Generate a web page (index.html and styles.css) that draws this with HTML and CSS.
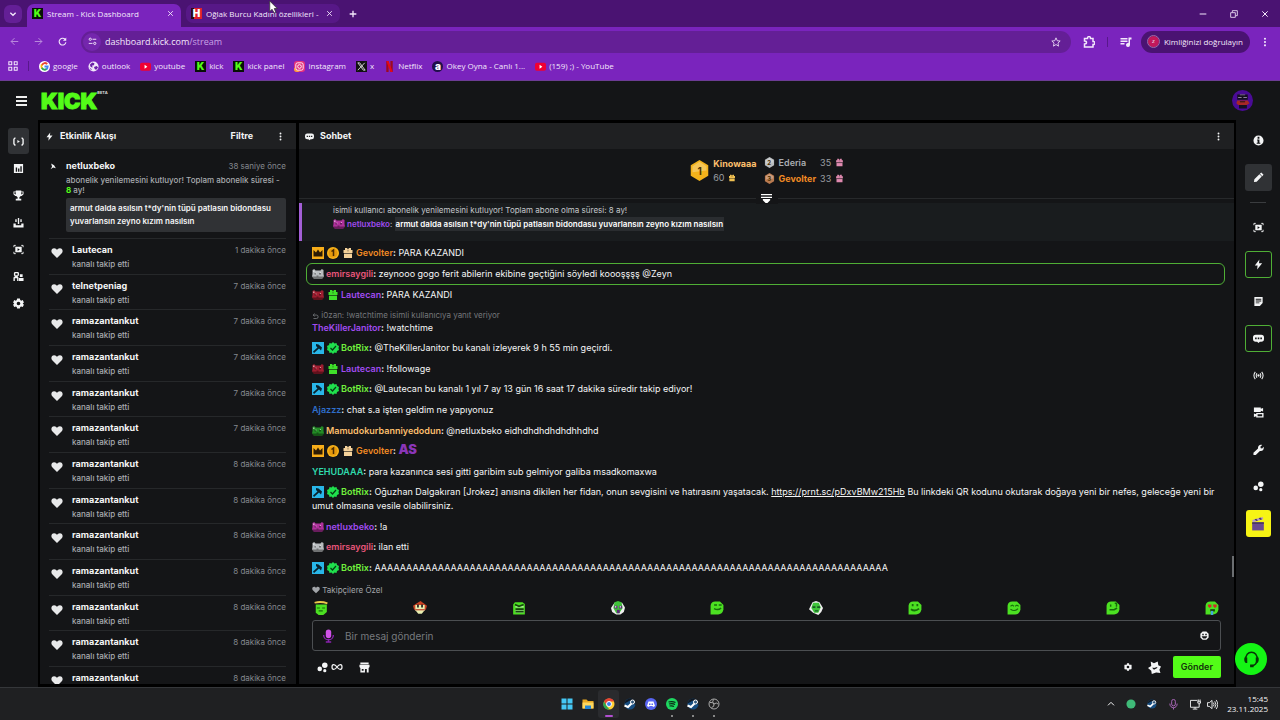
FILE: index.html
```html
<!DOCTYPE html>
<html lang="tr">
<head>
<meta charset="utf-8">
<title>Stream - Kick Dashboard</title>
<link rel="stylesheet" href="styles.css">
</head>
<body>
<svg class="sprite" aria-hidden="true">
  <symbol id="heart" viewBox="0 0 24 24"><path d="M12 22 2.500 12.600C-1 8.500 1 2.500 6.300 2.500 9 2.500 11 4 12 6c1-2 3-3.500 5.700-3.500 5.300 0 7.300 6 3.800 10.100z"/></symbol>
  <symbol id="bolt" viewBox="0 0 24 24"><path d="M14 1 4 14h6l-1 9L20 9h-7z"/></symbol>
  <symbol id="dots" viewBox="0 0 24 24"><circle cx="12" cy="4" r="2.500"/><circle cx="12" cy="12" r="2.500"/><circle cx="12" cy="20" r="2.500"/></symbol>
  <symbol id="gear" viewBox="0 0 24 24"><path fill-rule="evenodd" d="M9 1h6l.8 3.600 2 1.200 3.500-1.200 2.500 5-2.600 2.400 2.600 2.600-2.600 4.800-3.500-1-2 1.100L15 23H9l-.8-3.500-2-1.100-3.500 1L.2 14.600 2.800 12 .2 9.600l2.500-5 3.500 1.200 2-1.200zM12 8a4 4 0 1 0 0 8 4 4 0 0 0 0-8z"/></symbol>
  <symbol id="chat" viewBox="0 0 24 24"><path fill-rule="evenodd" d="M6 4h12a6 6 0 0 1 6 6v3a6 6 0 0 1-6 6h-3l-3 3-3-3H6a6 6 0 0 1-6-6v-3a6 6 0 0 1 6-6zm-1.500 6v3.500H8V10zm5.800 0v3.500h3.500V10zm5.700 0v3.500h3.500V10z"/></symbol>
  <symbol id="live" viewBox="0 0 24 24"><path d="M9.500 8.500 15 12l-5.500 3.500z"/><path fill="none" stroke="currentColor" stroke-width="3" d="M5.500 4.500H4L2 7v10l2 2.500h1.500M18.500 4.500H20L22 7v10l-2 2.500h-1.500"/></symbol>
  <symbol id="signal" viewBox="0 0 24 24"><circle cx="12" cy="12" r="2.500"/><path fill="none" stroke="currentColor" stroke-width="2.200" d="M5 4q-6 8 0 16M19 4q6 8 0 16M8.500 7q-3 5 0 10M15.500 7q3 5 0 10"/></symbol>
  <symbol id="stats" viewBox="0 0 24 24"><path fill-rule="evenodd" d="M2 2h20v20H2zm4 8v9h3v-9zm5 2v7h3v-7zm5-5v12h3V7z"/></symbol>
  <symbol id="cup" viewBox="0 0 24 24"><path fill-rule="evenodd" d="M6 1h12v2h5v6l-4 4h-2l-3 3v3h4v4H6v-4h4v-3l-3-3H5L1 9V3h5zM3 5v3l3 2V5zm15 0v5l3-2V5z"/></symbol>
  <symbol id="stream" viewBox="0 0 24 24"><path d="M1 14h5v4h12v-4h5v9H1zM10.500 2h3v13h-3zM5 5h3v6H5zM16 5h3v6h-3z"/></symbol>
  <symbol id="clip" viewBox="0 0 24 24"><path fill-rule="evenodd" d="M5 6h14v12H5zm5 3v6l5-3z"/><path fill="none" stroke="currentColor" stroke-width="2" d="M2 7V3h4M18 3h4v4M22 17v4h-4M6 21H2v-4"/></symbol>
  <symbol id="people" viewBox="0 0 24 24"><path fill-rule="evenodd" d="M4 2h7l2 2v5l-3 3 2 2v8H9v-6H4v6H1v-8l3-2-2-3V4zm1 3v4h5V5zM15 7h6v6h-6zM13 15h10v7H13z"/></symbol>
  <symbol id="info" viewBox="0 0 24 24"><path fill-rule="evenodd" d="M12 1a11 11 0 1 1 0 22 11 11 0 0 1 0-22zm-2 3v4h4V4zM9 10v2h1v5H8v2h8v-2h-2v-7z"/></symbol>
  <symbol id="pencil" viewBox="0 0 24 24"><path d="m2 22 1-6L14 5l5 5L8 21zM15 4l3-3 5 5-3 3z"/></symbol>
  <symbol id="note" viewBox="0 0 24 24"><path fill-rule="evenodd" d="M3 2h18v13l-6 7H3zm3 4v2h12V6zm0 4v2h12v-2zm0 4v2h8v-2z"/></symbol>
  <symbol id="cams" viewBox="0 0 24 24"><path fill-rule="evenodd" d="M2 1h15v3l5-2v8l-5-2v3H2zM7 13h16v10H7v-3l-5 2v-8l5 2zm3 3v4h10v-4z"/></symbol>
  <symbol id="wrench" viewBox="0 0 24 24"><path d="M1 19 11 10c-1-5 3-10 9-8l-4 4 1 3 3 1 3-4c2 6-3 11-8 9l-9 9H1z"/></symbol>
  <symbol id="orbs" viewBox="0 0 24 24"><circle cx="17" cy="7" r="6"/><circle cx="6" cy="15" r="5"/><circle cx="17" cy="19" r="3.500"/></symbol>
  <symbol id="mic" viewBox="0 0 24 24"><rect x="7" y="0" width="10" height="16" rx="5" fill="#d052e8"/><path fill="none" stroke="currentColor" stroke-width="2.500" d="M3 10c0 12 18 12 18 0M12 19v5M7 23h10"/></symbol>
  <symbol id="micline" viewBox="0 0 24 24"><g fill="none" stroke="currentColor" stroke-width="2"><rect x="8" y="1" width="8" height="14" rx="4"/><path d="M4 10c0 12 16 12 16 0M12 19v4"/></g></symbol>
  <symbol id="shop" viewBox="0 0 24 24"><path fill-rule="evenodd" d="M3 1h18v4H3zM1 6h22v5l-2 2v10h-4v-8h-4v8H3V13l-2-2zm5 9v4h4v-4z"/></symbol>
  <symbol id="face" viewBox="0 0 24 24"><path fill-rule="evenodd" d="M7 1h10l6 6v10l-6 6H7l-6-6V7zM6 7v4h4V7zm8 0v4h4V7zM5 14v2l4 4h6l4-4v-2z"/></symbol>
  <symbol id="badge" viewBox="0 0 24 24"><path fill-rule="evenodd" d="m5 1 6 3 7-3 1 7 5 2-3 6 2 6-8-1-8 3-1-6-6-5 6-4zm3 12 3 3 6-3v-2l-6 2-2-1z"/></symbol>
  <symbol id="headset" viewBox="0 0 24 24"><path fill="none" stroke="#073507" stroke-width="2" d="M4 13C2-2 22-2 20 13q-1 7-7 8"/><path fill="#073507" d="M2 9h4v8H4q-3-2-2-8zm16 0h4q1 6-2 8h-2zM10 19h5v4h-5z"/></symbol>
  <symbol id="reply" viewBox="0 0 24 24"><path fill="none" stroke="currentColor" stroke-width="3" d="M9 2 4 7l5 5M4 7h11q6 0 6 6t-6 6H5"/></symbol>
  <symbol id="close" viewBox="0 0 24 24"><path fill="none" stroke="currentColor" stroke-width="3" d="m4 4 16 16M20 4 4 20"/></symbol>
  <symbol id="plus" viewBox="0 0 24 24"><path fill="none" stroke="currentColor" stroke-width="4" d="M12 2v20M2 12h20"/></symbol>
  <symbol id="down" viewBox="0 0 24 24"><path fill="none" stroke="currentColor" stroke-width="4" d="m4 8 8 8 8-8"/></symbol>
  <symbol id="up" viewBox="0 0 24 24"><path fill="none" stroke="currentColor" stroke-width="3" d="m3 16 9-9 9 9"/></symbol>
  <symbol id="arrow" viewBox="0 0 24 24"><path fill="none" stroke="currentColor" stroke-width="2.500" d="M22 12H3M12 3l-9 9 9 9"/></symbol>
  <symbol id="reload" viewBox="0 0 24 24"><path fill="none" stroke="currentColor" stroke-width="3" d="M20 8a9 9 0 1 0 1 6"/><path d="M22 1v9h-9z"/></symbol>
  <symbol id="tune" viewBox="0 0 24 24"><g fill="none" stroke="currentColor" stroke-width="2.500"><circle cx="6" cy="6" r="3"/><circle cx="18" cy="17" r="3"/><path d="M12 6h10M2 17h10"/></g></symbol>
  <symbol id="star" viewBox="0 0 24 24"><path fill="none" stroke="currentColor" stroke-width="2" d="m12 2 3 7 7 .6-5.300 5L18 22l-6-4-6 4 1.300-7.400L2 9.600 9 9z"/></symbol>
  <symbol id="puzzle" viewBox="0 0 24 24"><path fill="none" stroke="currentColor" stroke-width="3" d="M3 5h6q0-4 3-4t3 4h5v6q4 0 4 3t-4 3v5H3v-6q4 0 4-3t-4-3z"/></symbol>
  <symbol id="media" viewBox="0 0 24 24"><path d="M1 4h14v3H1zM1 9h14v3H1zM1 14h8v3H1zM17 3h6v4h-3v11a4 4 0 1 1-3-4z"/></symbol>
  <symbol id="apps" viewBox="0 0 24 24"><path fill="none" stroke="currentColor" stroke-width="2.500" d="M2 2h7v7H2zM15 2h7v7h-7zM2 15h7v7H2zM15 15h7v7h-7z"/></symbol>
  <symbol id="google" viewBox="0 0 24 24"><circle cx="12" cy="12" r="12" fill="#fff"/><g fill="none" stroke-width="4"><path stroke="#ea4335" d="M6 9q6-8 12-2"/><path stroke="#fbbc05" d="M6 8q-2 4 0 8"/><path stroke="#34a853" d="M6 15q5 7 11 2"/><path stroke="#4285f4" d="M12 12h7q0 4-3 6"/></g></symbol>
  <symbol id="globe" viewBox="0 0 24 24"><circle cx="12" cy="12" r="11" fill="#f1e7fa"/><path fill="#6b21a8" d="m4 8 5-5 5 2-1 4-4 1 1 4-4-1zm9 5 6-2 3 3-4 5-3-1zM3 14l5 4-1 2z"/></symbol>
  <symbol id="youtube" viewBox="0 0 24 24"><rect y="4" width="24" height="17" rx="4" fill="#f00033"/><path fill="#fff" d="m10 8 6 4.500-6 4.500z"/></symbol>
  <symbol id="insta" viewBox="0 0 24 24"><rect width="24" height="24" rx="6" fill="#e4307c"/><path fill="#f99b3c" d="M0 14 12 24H6q-6 0-6-6z"/><g fill="none" stroke="#fff" stroke-width="2"><rect x="4" y="4" width="16" height="16" rx="4"/><circle cx="12" cy="12" r="4"/></g></symbol>
  <symbol id="cross" viewBox="0 0 24 24"><path fill="#111" d="M0 0h24v24H0z"/><path fill="none" stroke="#ddd" stroke-width="2" d="M4 4h4l12 16h-4zM19 4 4 20"/></symbol>
  <symbol id="ribbon" viewBox="0 0 24 24"><path fill="#9d0920" d="M5 0h5v24H5zM14 0h5v24h-5z"/><path fill="#e50914" d="M5 0h5l9 24h-5z"/></symbol>
  <symbol id="crown" viewBox="0 0 24 24"><path fill="#f7ad19" d="M0 0h24v24H0z"/><path fill="#2c1b04" d="m3 6 5 5 4-6 4 6 5-5v13H3z"/></symbol>
  <symbol id="coin" viewBox="0 0 24 24"><circle cx="12" cy="12" r="12" fill="#f9b51b"/><circle cx="12" cy="12" r="9" fill="#e69a0d"/><path fill="none" stroke="#4a2b00" stroke-width="3" d="m9 9 4-3v12"/></symbol>
  <symbol id="gift" viewBox="0 0 24 24"><path d="M3 6h18v6H3zM4 13h16v9H4zM6 2h4l2 3 2-3h4v4H6z"/><path fill="#0003" d="M3 12h18v2H3zM10 6h4v3h-4z"/></symbol>
  <symbol id="hammer" viewBox="0 0 24 24"><path fill="#29b6e8" d="M0 0h24v24H0z"/><path fill="#08222d" d="m8 4 5 1 7 6-2 6-4-4L4 22l-2-3 9-8-3-3z"/></symbol>
  <symbol id="verified" viewBox="0 0 24 24"><path fill="#1fe04d" d="m12 0 3 3 4-1 1 4 4 2-1 4 1 4-4 2-1 4-4-1-3 3-3-3-4 1-1-4-4-2 1-4-1-4 4-2 1-4 4 1z"/><path fill="none" stroke="#063d14" stroke-width="2.500" d="m7 12 4 4 7-8"/></symbol>
  <symbol id="critter" viewBox="0 0 24 24"><path d="M1 4q4-3 6 1h10q2-4 6-1v8l1 5-4 5H4l-4-5 1-5z"/><path fill="#0006" d="M5 10h3v3H5zM14 10h4v3h-4zM9 15h4v2H9zM0 17h24l-4 5H4z"/><path fill="#fff8" d="M7 9h2v2H7zM16 8h2v2h-2zM2 5h3v3H2z"/></symbol>
  <symbol id="hex" viewBox="0 0 24 24"><path d="M12 0 22 6v12l-10 6L2 18V6z"/><path fill="#fff4" d="m12 2 8 5v5L4 14V7z"/></symbol>
  <symbol id="collapse" viewBox="0 0 24 24"><path fill="#fff" d="M0 2h24v3H0zM0 8h24v3H0zM4 13h16v3l-6 6h-4l-6-6z"/></symbol>
  <symbol id="blob" viewBox="0 0 24 24"><path fill="#4ce022" d="M1 8q1-7 8-7h8l6 6v8q-2 8-9 8H1z"/></symbol>
  <symbol id="steam" viewBox="0 0 24 24"><circle cx="12" cy="12" r="11" fill="#164d80"/><path fill="#101923" d="M1 11C4-3 23-1 23 10v4L12 5z"/><path fill="none" stroke="#fff" stroke-width="4" d="m1 15 7 3 7-7"/><circle cx="17" cy="8" r="4" fill="#31587c" stroke="#fff" stroke-width="2"/></symbol>
  <symbol id="windows" viewBox="0 0 24 24"><path fill="#45c7f4" d="M1 1h10v10H1zM13 1h10v10H13zM1 13h10v10H1zM13 13h10v10H13z"/></symbol>
  <symbol id="folder" viewBox="0 0 24 24"><path fill="#e8a822" d="M1 3h8l3 3h11v15H1z"/><path fill="#ffd75e" d="M1 9h22v12H1z"/><path fill="#2687d5" d="M6 15h12v7H6z"/></symbol>
  <symbol id="chrome" viewBox="0 0 24 24"><circle cx="12" cy="12" r="11" fill="#ffcf33"/><path fill="#e94235" d="M2 7C7-2 19-1 22 7H12l-5 8z"/><path fill="#2da94f" d="m2 7 6 10 5 6C2 24-2 14 2 7z"/><circle cx="12" cy="12" r="5" fill="#3b7ded" stroke="#fff" stroke-width="2"/></symbol>
  <symbol id="discord" viewBox="0 0 24 24"><circle cx="12" cy="12" r="12" fill="#5865f2"/><path fill="#fff" d="M7 7h10l3 9-4 2-1-2H9l-1 2-4-2z"/><path fill="#5865f2" d="M8 11h3v3H8zM13 11h3v3h-3z"/></symbol>
  <symbol id="spotify" viewBox="0 0 24 24"><circle cx="12" cy="12" r="12" fill="#1ed760"/><path fill="none" stroke="#0a2814" stroke-width="2.400" d="M5 8q8-2 14 1M6 12q7-2 12 1M7 16q6-1 9 1"/></symbol>
  <symbol id="obs" viewBox="0 0 24 24"><circle cx="12" cy="12" r="10" fill="#222" stroke="#aaa" stroke-width="2"/><path fill="none" stroke="#aaa" stroke-width="2" d="M11 3q-4 5 1 9 5-4 8 0M12 12q1 6-5 7M4 9q5-1 8 3"/></symbol>
  <symbol id="avatar" viewBox="0 0 24 24"><circle cx="12" cy="12" r="12" fill="#4a0b96"/><path fill="#151020" d="M6 5h12v6H6zM8 17h9v4H8z"/><path fill="#a82825" d="M6 12h12l2 3-3 2H7l-2-2z"/><path fill="#8d7f9c" d="M7 8h4v1H7zM13 8h4v1h-4zM9 5h6v1H9z"/><path fill="#111" d="M9 13h6v1H9z"/></symbol>
  <symbol id="clapper" viewBox="0 0 24 24"><path fill="#6b4a91" d="M2 9h20v14H2z"/><path fill="#b79ac8" d="M2 5 20 0l1 4L3 9z"/><path fill="#4d3966" d="m6 4 3 3 3-1-3-3zm7-2 3 3 3-1-3-3zM2 9h20v3H2z"/></symbol>
</svg>

<header class="browser">
  <div class="tabstrip">
    <button class="tab-search" aria-label="Sekmelerde ara"><svg class="i8"><use href="#down"/></svg></button>
    <div class="tab tab-active"><span class="fav">K</span><span class="tab-title">Stream - Kick Dashboard</span><button class="plain" aria-label="Kapat"><svg class="i7"><use href="#close"/></svg></button></div>
    <div class="tab"><span class="fav fav-h">H</span><span class="tab-title">Oğlak Burcu Kadını özellikleri -</span><button class="plain" aria-label="Kapat"><svg class="i7"><use href="#close"/></svg></button></div>
    <button class="plain new-tab" aria-label="Yeni sekme"><svg class="i8"><use href="#plus"/></svg></button>
    <div class="window-buttons">
      <button class="plain" aria-label="Küçült"><svg class="i8" viewBox="0 0 24 24"><path stroke="currentColor" stroke-width="3" d="M2 12h20"/></svg></button>
      <button class="plain" aria-label="Geri yükle"><svg class="i8" viewBox="0 0 24 24"><path fill="none" stroke="currentColor" stroke-width="2.500" d="M2 8h14v14H2zM7 7V2h15v15h-5"/></svg></button>
      <button class="plain" aria-label="Pencereyi kapat"><svg class="i8"><use href="#close"/></svg></button>
    </div>
    <svg class="cursor" viewBox="0 0 12 18"><path fill="#fff" stroke="#333" d="M1 1v14l3-3 3 5 2-1-2-5h4z"/></svg>
  </div>
  <div class="toolbar">
    <button class="plain nav dim" aria-label="Geri"><svg class="i9"><use href="#arrow"/></svg></button>
    <button class="plain nav dim flip" aria-label="İleri"><svg class="i9"><use href="#arrow"/></svg></button>
    <button class="plain nav" aria-label="Yenile"><svg class="i9"><use href="#reload"/></svg></button>
    <div class="address"><span class="site"><svg class="i9"><use href="#tune"/></svg></span><span class="url">dashboard.kick.com<span>/stream</span></span><svg class="i10"><use href="#star"/></svg></div>
    <button class="plain" aria-label="Uzantılar"><svg class="i12"><use href="#puzzle"/></svg></button>
    <span class="rule"></span>
    <button class="plain" aria-label="Medya"><svg class="i12"><use href="#media"/></svg></button>
    <button class="profile"><span class="initial">z</span>Kimliğinizi doğrulayın</button>
    <button class="plain" aria-label="Menü"><svg class="i10"><use href="#dots"/></svg></button>
  </div>
  <nav class="bookmarks">
    <a href="#" aria-label="Uygulamalar"><svg class="i10"><use href="#apps"/></svg></a><span class="rule"></span>
    <a href="#"><svg><use href="#google"/></svg>google</a>
    <a href="#"><svg><use href="#globe"/></svg>outlook</a>
    <a href="#"><svg><use href="#youtube"/></svg>youtube</a>
    <a href="#"><span class="fav">K</span>kick</a>
    <a href="#"><span class="fav">K</span>kick panel</a>
    <a href="#"><svg><use href="#insta"/></svg>instagram</a>
    <a href="#"><svg><use href="#cross"/></svg>x</a>
    <a href="#"><svg><use href="#ribbon"/></svg>Netflix</a>
    <a href="#"><span class="fav fav-a">a</span>Okey Oyna - Canlı 1...</a>
    <a href="#"><svg><use href="#youtube"/></svg>(159) ;) - YouTube</a>
  </nav>
</header>

<header class="app-header">
  <button class="menu" aria-label="Menü"><span></span><span></span><span></span></button>
  <a class="logo" href="#">KICK<sup>BETA</sup></a>
  <button class="plain account" aria-label="Hesap"><svg><use href="#avatar"/></svg></button>
</header>

<main class="workspace">
  <nav class="rail rail-left">
    <button class="on" aria-label="Yayın"><svg><use href="#live"/></svg></button>
    <button aria-label="İstatistik"><svg><use href="#stats"/></svg></button>
    <button aria-label="Başarılar"><svg><use href="#cup"/></svg></button>
    <button aria-label="Kanal"><svg><use href="#stream"/></svg></button>
    <button aria-label="Klipler"><svg><use href="#clip"/></svg></button>
    <button aria-label="Topluluk"><svg><use href="#people"/></svg></button>
    <button aria-label="Ayarlar"><svg><use href="#gear"/></svg></button>
  </nav>

  <section class="panel activity">
    <div class="panel-head"><svg class="i9"><use href="#bolt"/></svg><h2>Etkinlik Akışı</h2><button class="plain filter">Filtre</button><button class="plain" aria-label="Seçenekler"><svg class="i9"><use href="#dots"/></svg></button></div>
    <article class="renewal">
      <svg class="i7" viewBox="0 0 24 24"><path d="M4 2 14 8l6 10-9-3-9 6 5-8z"/></svg>
      <div class="event-body">
        <div class="event-top"><b>netluxbeko</b><time>38 saniye önce</time></div>
        <p>abonelik yenilemesini kutluyor! Toplam abonelik süresi - <em>8</em> ay!</p>
        <blockquote>armut dalda asılsın t*dy'nin tüpü patlasın bidondasu yuvarlansın zeyno kızım nasılsın</blockquote>
      </div>
    </article>
    <div class="events">
      <article class="event"><svg><use href="#heart"/></svg><div class="event-body"><div class="event-top"><b>Lautecan</b><time>1 dakika önce</time></div><p>kanalı takip etti</p></div></article>
      <article class="event"><svg><use href="#heart"/></svg><div class="event-body"><div class="event-top"><b>telnetpeniag</b><time>7 dakika önce</time></div><p>kanalı takip etti</p></div></article>
      <article class="event"><svg><use href="#heart"/></svg><div class="event-body"><div class="event-top"><b>ramazantankut</b><time>7 dakika önce</time></div><p>kanalı takip etti</p></div></article>
      <article class="event"><svg><use href="#heart"/></svg><div class="event-body"><div class="event-top"><b>ramazantankut</b><time>7 dakika önce</time></div><p>kanalı takip etti</p></div></article>
      <article class="event"><svg><use href="#heart"/></svg><div class="event-body"><div class="event-top"><b>ramazantankut</b><time>7 dakika önce</time></div><p>kanalı takip etti</p></div></article>
      <article class="event"><svg><use href="#heart"/></svg><div class="event-body"><div class="event-top"><b>ramazantankut</b><time>7 dakika önce</time></div><p>kanalı takip etti</p></div></article>
      <article class="event"><svg><use href="#heart"/></svg><div class="event-body"><div class="event-top"><b>ramazantankut</b><time>8 dakika önce</time></div><p>kanalı takip etti</p></div></article>
      <article class="event"><svg><use href="#heart"/></svg><div class="event-body"><div class="event-top"><b>ramazantankut</b><time>8 dakika önce</time></div><p>kanalı takip etti</p></div></article>
      <article class="event"><svg><use href="#heart"/></svg><div class="event-body"><div class="event-top"><b>ramazantankut</b><time>8 dakika önce</time></div><p>kanalı takip etti</p></div></article>
      <article class="event"><svg><use href="#heart"/></svg><div class="event-body"><div class="event-top"><b>ramazantankut</b><time>8 dakika önce</time></div><p>kanalı takip etti</p></div></article>
      <article class="event"><svg><use href="#heart"/></svg><div class="event-body"><div class="event-top"><b>ramazantankut</b><time>8 dakika önce</time></div><p>kanalı takip etti</p></div></article>
      <article class="event"><svg><use href="#heart"/></svg><div class="event-body"><div class="event-top"><b>ramazantankut</b><time>8 dakika önce</time></div><p>kanalı takip etti</p></div></article>
      <article class="event"><svg><use href="#heart"/></svg><div class="event-body"><div class="event-top"><b>ramazantankut</b><time>8 dakika önce</time></div></div></article>
    </div>
  </section>

  <section class="panel chat">
    <div class="panel-head"><svg class="i9"><use href="#chat"/></svg><h2>Sohbet</h2><button class="plain push" aria-label="Seçenekler"><svg class="i9"><use href="#dots"/></svg></button></div>
    <div class="leaders">
      <div class="first"><span class="medal"><svg class="yellow"><use href="#hex"/></svg><i>1</i></span><div><b class="c-sand">Kinowaaa</b><span class="score">60 <svg class="i8 sand"><use href="#gift"/></svg></span></div></div>
      <div class="others">
        <span class="medal small"><svg class="silver"><use href="#hex"/></svg><i>2</i></span><b class="c-gray">Ederia</b><span class="score">35 <svg class="i9 pink"><use href="#gift"/></svg></span>
        <span class="medal small"><svg class="bronze"><use href="#hex"/></svg><i>3</i></span><b class="c-orange">Gevolter</b><span class="score">33 <svg class="i9 pink"><use href="#gift"/></svg></span>
      </div>
      <button class="plain collapse" aria-label="Daralt"><svg class="i11"><use href="#collapse"/></svg></button>
    </div>
    <div class="celebration">
      <p>isimli kullanıcı abonelik yenilemesini kutluyor! Toplam abone olma süresi: 8 ay!</p>
      <p><svg class="bdg magenta"><use href="#critter"/></svg><b class="c-purple">netluxbeko</b>: <mark>armut dalda asılsın t*dy'nin tüpü patlasın bidondasu yuvarlansın zeyno kızım nasılsın</mark></p>
    </div>
    <div class="feed">
      <p><svg class="bdg"><use href="#crown"/></svg><svg class="bdg"><use href="#coin"/></svg><svg class="bdg cream"><use href="#gift"/></svg><b class="c-orange">Gevolter</b><b>:</b> PARA KAZANDI</p>
      <p class="mention"><svg class="bdg silver"><use href="#critter"/></svg><b class="c-pink">emirsaygili</b><b>:</b> zeynooo gogo ferit abilerin ekibine geçtiğini söyledi koooşşşş @Zeyn</p>
      <p><svg class="bdg crimson"><use href="#critter"/></svg><svg class="bdg green"><use href="#gift"/></svg><b class="c-purple">Lautecan</b><b>:</b> PARA KAZANDI</p>
      <div><p class="reply"><svg class="i7"><use href="#reply"/></svg> i0zan: !watchtime isimli kullanıcıya yanıt veriyor</p><p><b class="c-purple">TheKillerJanitor</b><b>:</b> !watchtime</p></div>
      <p><svg class="bdg"><use href="#hammer"/></svg><svg class="bdg"><use href="#verified"/></svg><b class="c-green">BotRix</b><b>:</b> @TheKillerJanitor bu kanalı izleyerek 9 h 55 min geçirdi.</p>
      <p><svg class="bdg crimson"><use href="#critter"/></svg><svg class="bdg green"><use href="#gift"/></svg><b class="c-purple">Lautecan</b><b>:</b> !followage</p>
      <p><svg class="bdg"><use href="#hammer"/></svg><svg class="bdg"><use href="#verified"/></svg><b class="c-green">BotRix</b><b>:</b> @Lautecan bu kanalı 1 yıl 7 ay 13 gün 16 saat 17 dakika süredir takip ediyor!</p>
      <p><b class="c-blue">Ajazzz</b><b>:</b> chat s.a işten geldim ne yapıyonuz</p>
      <p><svg class="bdg forest"><use href="#critter"/></svg><b class="c-sand">Mamudokurbanniyedodun</b><b>:</b> @netluxbeko eidhdhdhdhdhdhhdhd</p>
      <p><svg class="bdg"><use href="#crown"/></svg><svg class="bdg"><use href="#coin"/></svg><svg class="bdg cream"><use href="#gift"/></svg><b class="c-orange">Gevolter</b><b>:</b> <span class="as">AS</span></p>
      <p><b class="c-teal">YEHUDAAA</b><b>:</b> para kazanınca sesi gitti garibim sub gelmiyor galiba msadkomaxwa</p>
      <p><svg class="bdg"><use href="#hammer"/></svg><svg class="bdg"><use href="#verified"/></svg><b class="c-green">BotRix</b><b>:</b> Oğuzhan Dalgakıran [Jrokez] anısına dikilen her fidan, onun sevgisini ve hatırasını yaşatacak. <a href="#">https://prnt.sc/pDxvBMw215Hb</a> Bu linkdeki QR kodunu okutarak doğaya yeni bir nefes, geleceğe yeni bir umut olmasına vesile olabilirsiniz.</p>
      <p><svg class="bdg magenta"><use href="#critter"/></svg><b class="c-purple">netluxbeko</b><b>:</b> !a</p>
      <p><svg class="bdg silver"><use href="#critter"/></svg><b class="c-pink">emirsaygili</b><b>:</b> ilan etti</p>
      <p><svg class="bdg"><use href="#hammer"/></svg><svg class="bdg"><use href="#verified"/></svg><b class="c-green">BotRix</b><b>:</b> AAAAAAAAAAAAAAAAAAAAAAAAAAAAAAAAAAAAAAAAAAAAAAAAAAAAAAAAAAAAAAAAAAAAAAAAAAAAAAAAA</p>
      <span class="thumb"></span>
    </div>
    <div class="composer">
      <p class="mode"><svg class="i8"><use href="#heart"/></svg> Takipçilere Özel</p>
      <div class="emotes">
        <button class="plain" aria-label="Melek"><svg viewBox="0 0 24 24"><path fill="#4ce022" d="M3 6h19v13l-6 5H8l-5-4z"/><path fill="none" stroke="#e9c84b" stroke-width="3" d="M1 3q11-3 22 1"/><path fill="none" stroke="#176b0b" stroke-width="2" d="M5 12h5M14 12h5M8 17h7"/></svg></button>
        <button class="plain" aria-label="Şapkalı"><svg viewBox="0 0 24 24"><path fill="#c84123" d="M0 8 8 3l5-3 4 3 7 5-2 7H2z"/><path fill="#e9efb0" d="M4 7h16v9l-5 6H9l-5-6z"/><path fill="#222" d="M7 6h3v5H7zM14 6h3v5h-3z"/><path fill="#bb3d2a" d="M4 14h16v2H4z"/></svg></button>
        <button class="plain" aria-label="Kızgın"><svg viewBox="0 0 24 24"><path fill="#4ce022" d="M5 2h13l4 3v18H2V6z"/><path fill="#a9e795" d="M6 8h14v3H6zM6 16h14v4H6z"/><path fill="none" stroke="#16440d" stroke-width="3" d="m5 6 7 3 8-3M6 14h14M6 18h14"/></svg></button>
        <button class="plain" aria-label="Şaşkın"><svg viewBox="0 0 24 24"><path fill="#eee" d="M6 3h13l5 8-2 8-6 4H9l-7-4-2-7z"/><path fill="#3fc33a" d="M6 2 12 0l6 2 2 10-6 9H9L4 12z"/><path fill="#5b2c75" d="M6 8h5v5H6zM14 8h5v5h-5zM10 15h5v6h-5z"/><path fill="#fff" d="M7 9h2v2H7zM15 9h2v2h-2z"/></svg></button>
        <button class="plain" aria-label="Sırıtan"><svg viewBox="0 0 24 24"><use href="#blob"/><path fill="none" stroke="#176b0b" stroke-width="2.500" d="M7 7h5M15 7h5M7 13q7 4 12-1"/></svg></button>
        <button class="plain" aria-label="Soğuk"><svg viewBox="0 0 24 24"><path fill="#eee" d="M6 2 12 0l6 2 6 10-3 7-5 5-9-4-7-6z"/><path fill="#3fc33a" d="M7 3h10l3 8-4 9H9L4 12z"/><path fill="#145c22" d="M6 9h5v3H6zM14 9h5v3h-5zM10 16h6v2h-6z"/></svg></button>
        <button class="plain" aria-label="Mutlu"><svg viewBox="0 0 24 24"><use href="#blob"/><path fill="none" stroke="#176b0b" stroke-width="3" d="M8 5v4M16 5v4M5 14q7 5 14-1"/></svg></button>
        <button class="plain" aria-label="Gülen"><svg viewBox="0 0 24 24"><use href="#blob"/><path fill="none" stroke="#176b0b" stroke-width="2" d="m6 9 3-2 3 2M14 9l3-2 3 2M6 14q7 5 13-1"/></svg></button>
        <button class="plain" aria-label="Düşünen"><svg viewBox="0 0 24 24"><use href="#blob"/><path fill="none" stroke="#176b0b" stroke-width="2.500" d="M8 6v4M15 4h3v6M6 15h8l5-3"/></svg></button>
        <button class="plain" aria-label="Aşık"><svg viewBox="0 0 24 24"><use href="#blob"/><path fill="#d32a2a" d="M5 6h6v4l-3 2-3-3zM14 6h6v4l-3 2-3-3z"/><path fill="#1b4412" d="M9 14h8v4H9z"/><path fill="#44a9d8" d="M10 17h4v7h-4z"/></svg></button>
      </div>
      <div class="field"><svg class="mic"><use href="#mic"/></svg><input type="text" aria-label="Mesaj" placeholder="Bir mesaj gönderin"><button class="plain" aria-label="İfadeler"><svg class="i9"><use href="#face"/></svg></button></div>
      <div class="actions">
        <button class="plain points" aria-label="Kanal puanları"><svg class="i11"><use href="#orbs"/></svg><svg class="inf" viewBox="0 0 24 14"><path fill="none" stroke="currentColor" stroke-width="2.500" d="M12 7C7 0 2 1 2 7s5 7 10 0 10-6 10 0-5 7-10 0z"/></svg></button>
        <button class="plain" aria-label="Mağaza"><svg class="i11"><use href="#shop"/></svg></button>
        <button class="plain push" aria-label="Sohbet ayarları"><svg class="i8"><use href="#gear"/></svg></button>
        <button class="plain" aria-label="Kimlik"><svg class="i13"><use href="#badge"/></svg></button>
        <button class="send">Gönder</button>
      </div>
    </div>
  </section>

  <nav class="rail rail-right">
    <button aria-label="Bilgi"><svg><use href="#info"/></svg></button>
    <button class="on" aria-label="Düzenle"><svg><use href="#pencil"/></svg></button>
    <hr>
    <button aria-label="Önizleme"><svg><use href="#clip"/></svg></button>
    <button class="outlined" aria-label="Etkinlik"><svg><use href="#bolt"/></svg></button>
    <button aria-label="Notlar"><svg><use href="#note"/></svg></button>
    <button class="outlined" aria-label="Sohbet"><svg><use href="#chat"/></svg></button>
    <button aria-label="Yayın durumu"><svg><use href="#signal"/></svg></button>
    <button aria-label="Kameralar"><svg><use href="#cams"/></svg></button>
    <button aria-label="Araçlar"><svg><use href="#wrench"/></svg></button>
    <button aria-label="Puanlar"><svg><use href="#orbs"/></svg></button>
    <button class="film" aria-label="Klip"><svg><use href="#clapper"/></svg></button>
  </nav>
  <button class="support" aria-label="Destek"><svg><use href="#headset"/></svg></button>
</main>

<footer class="taskbar">
  <div class="dock">
    <button aria-label="Başlat"><svg><use href="#windows"/></svg></button>
    <button aria-label="Dosyalar"><svg><use href="#folder"/></svg></button>
    <button class="focused" aria-label="Chrome"><svg><use href="#chrome"/></svg></button>
    <button aria-label="Steam"><svg><use href="#steam"/></svg></button>
    <button aria-label="Discord"><svg><use href="#discord"/></svg></button>
    <button class="open" aria-label="Spotify"><svg><use href="#spotify"/></svg></button>
    <button class="open" aria-label="Steam penceresi"><svg><use href="#steam"/></svg></button>
    <button class="open" aria-label="OBS"><svg><use href="#obs"/></svg></button>
  </div>
  <div class="tray">
    <svg class="i8"><use href="#up"/></svg>
    <svg class="i10" viewBox="0 0 24 24"><circle cx="12" cy="12" r="11" fill="#3fba78"/></svg>
    <svg class="i10"><use href="#steam"/></svg>
    <svg class="i11 orchid"><use href="#micline"/></svg>
    <svg class="i11" viewBox="0 0 24 24"><path fill="none" stroke="currentColor" stroke-width="2" d="M16 3H1v15h19v-6M6 22h10M11 18v4M18 1v4M22 1v4M17 5h6v4h-6zM20 9v4"/></svg>
    <svg class="i11" viewBox="0 0 24 24"><path fill="none" stroke="currentColor" stroke-width="2" d="M1 8h4l6-5v18l-6-5H1zM14 8q3 4 0 8M17 5q5 7 0 14M20 2q7 10 0 20"/></svg>
    <time class="clock">15:45<br>23.11.2025</time>
  </div>
</footer>
</body>
</html>
```
FILE: styles.css
```css
* { box-sizing: border-box; }
body {
  margin: 0;
  height: 100vh;
  display: flex;
  flex-direction: column;
  overflow: hidden;
  background: #141517;
  color: #f4f5f6;
  font: 9px/14px Inter, "Liberation Sans", sans-serif;
}
p, h2, blockquote { margin: 0; }
a { color: inherit; }
svg { flex: none; fill: currentColor; }
button { font: inherit; color: inherit; border: 0; padding: 0; background: none; display: flex; align-items: center; justify-content: center; flex: none; }
b { font-weight: 600; }
.sprite { display: none; }
.i7 { width: 7px; height: 7px; }
.i8 { width: 8px; height: 8px; }
.i9 { width: 9px; height: 9px; }
.i10 { width: 10px; height: 10px; }
.i11 { width: 11px; height: 11px; }
.i12 { width: 12px; height: 12px; }
.i13 { width: 13px; height: 13px; }
.push { margin-left: auto; }

/* Browser frame */
.browser { flex: none; background: #7a24bd; color: #f3e8fb; font-family: "Open Sans", "Noto Sans", sans-serif; font-size: 8px; }
.tabstrip { position: relative; display: flex; align-items: center; gap: 5px; height: 27px; padding: 0 11px 0 4px; background: #4a1372; }
.tab-search { width: 18px; height: 18px; border-radius: 6px; background: #641f96; }
.tab { display: flex; align-items: center; gap: 4px; width: 154px; height: 19px; padding: 0 7px 0 5px; border-radius: 7px; background: #571887; }
.tab-active { align-self: flex-end; height: 23px; padding-bottom: 4px; border-radius: 7px 7px 0 0; background: #7a24bd; }
.tab-title { flex: 1; overflow: hidden; white-space: nowrap; }
.new-tab { margin-left: 4px; }
.fav { flex: none; width: 11px; height: 11px; background: #071007; color: #53fc18; font: 900 10px/11px Inter, sans-serif; text-align: center; }
.fav-h { color: #fff; background: linear-gradient(90deg, #2b0a18 30%, #e0202c 30%); }
.fav-a { border-radius: 50%; background: #20104a; color: #fff; }
.window-buttons { display: flex; gap: 23px; margin-left: auto; }
.cursor { position: absolute; left: 269px; top: 0; width: 9px; height: 14px; z-index: 2; }
.toolbar { display: flex; align-items: center; gap: 12px; height: 29px; padding: 0 10px; }
.nav { margin-right: 3px; }
.dim { opacity: .55; }
.flip { transform: scaleX(-1); margin: 0 0 0 3px; }
.dim:not(.flip) { margin-right: 0; }
.flip + .nav { margin-left: 3px; margin-right: 2px; }
.address { flex: 1; display: flex; align-items: center; gap: 4px; height: 22px; padding: 0 10px 0 2px; border-radius: 11px; background: #641f96; font-size: 9px; }
.site { display: flex; align-items: center; justify-content: center; width: 18px; height: 18px; border-radius: 50%; background: #7426ad; }
.url { flex: 1; }
.url span { color: #c9a3e6; }
.rule { width: 1px; height: 10px; background: #58188b; }
.profile { gap: 5px; height: 22px; margin: 0 -2px 0 -3px; padding: 0 7px; border-radius: 11px; background: #4a1372; }
.initial { width: 11px; height: 11px; border-radius: 50%; background: #c2185b; font-size: 6px; line-height: 10px; outline: 1px solid #9c6aa8; }
.bookmarks { display: flex; align-items: center; gap: 10px; height: 25px; padding: 0 8px 4px; border-bottom: 1px solid #6c3c94; }
.bookmarks a { display: flex; align-items: center; gap: 3px; text-decoration: none; white-space: nowrap; }
.bookmarks a svg:not(.i10) { width: 11px; height: 11px; }

/* App header */
.app-header { flex: none; display: flex; align-items: center; height: 39px; padding: 0 27px 0 16px; }
.menu { flex-direction: column; gap: 2px; margin-right: 14px; }
.menu span { width: 11px; height: 2px; background: #eee; }
.logo { display: flex; align-items: flex-start; color: #53fc18; font-size: 22px; line-height: 22px; font-weight: 900; text-decoration: none; -webkit-text-stroke: 1px #53fc18; }
.logo sup { font-size: 4px; line-height: 6px; font-weight: 700; color: #ddd; -webkit-text-stroke: 0; }
.account { margin-left: auto; }
.account svg { width: 21px; height: 21px; }

/* Workspace */
.workspace { position: relative; flex: 1; min-height: 0; display: grid; grid-template-columns: 38px 260px 1fr 44px; }
.panel { display: flex; flex-direction: column; min-height: 0; min-width: 0; overflow: hidden; border: 2px solid #000; border-width: 3px 2px; }
.chat { border-left-width: 1px; }
.panel-head { flex: none; display: flex; align-items: center; gap: 6px; height: 26px; padding: 0 11px 0 5px; background: #1f2022; }
.panel-head h2, .filter { font-size: 9px; line-height: 14px; font-weight: 700; }
.filter { margin-left: auto; margin-right: 17px; }

.rail { display: flex; flex-direction: column; align-items: center; }
.rail button { width: 27px; height: 27px; border-radius: 3px; }
.rail svg { width: 11px; height: 11px; }
.rail-left { gap: 1px; padding: 8px 1px 0 0; }
.rail-left button { width: 21px; height: 26px; }
.rail-right { gap: 10px; padding-top: 7px; }
.rail hr { width: 16px; height: 1px; margin: 1px 0; border: 0; background: #3a3c3f; }
.rail .on { background: #303235; }
.rail .outlined { border: 1px solid #4fae35; }
.rail .film { width: 25px; background: #f7f414; }
.rail .film svg { width: 14px; height: 14px; }

/* Activity feed */
.activity p { color: #a9acb0; font-size: 8px; font-weight: 500; }
.event-body { flex: 1; min-width: 0; }
.event-top { display: flex; justify-content: space-between; }
.event-top b { font-weight: 700; }
.event-top time { color: #85898f; font-size: 8px; }
.renewal { display: flex; gap: 9px; margin: 0 10px 0 9px; padding: 10px 0 6px 1px; }
.renewal > svg { margin-top: 4px; }
.renewal p { line-height: 10px; margin-bottom: 3px; padding-top: 2px; }
.renewal em { color: #53fc18; font-style: normal; font-weight: 700; }
.renewal blockquote { padding: 4px; border-radius: 2px; background: #303235; font-size: 8px; line-height: 13px; font-weight: 600; }
.events { flex: 1; min-height: 0; overflow: hidden; margin: 0 10px 0 9px; }
.event { display: flex; gap: 9px; height: 36px; padding-top: 4px; border-top: 1px solid #26282a; }
.event:nth-child(3n + 2) { height: 35px; }
.event > svg { width: 12px; height: 12px; margin: 4px 0 0 2px; color: #e8e9ea; }

/* Chat */
.chat .panel-head { padding-left: 6px; }
.leaders { position: relative; flex: none; display: flex; justify-content: center; align-items: center; gap: 7px; height: 50px; padding-bottom: 6px; border-bottom: 1px solid #27292b; }
.leaders b { font-weight: 700; }
.leaders .c-gray { font-weight: 600; }
.first, .first > div { display: flex; }
.first { align-items: center; gap: 3px; }
.first > div { flex-direction: column; }
.others { display: grid; grid-template-columns: auto auto auto; column-gap: 4px; row-gap: 2px; align-items: center; }
.medal { display: grid; place-items: center; }
.medal > * { grid-area: 1 / 1; }
.medal svg { width: 21px; height: 21px; }
.medal i { z-index: 1; color: #4b3000; font-size: 10px; font-style: normal; font-weight: 700; }
.medal.small svg { width: 11px; height: 11px; }
.medal.small i { font-size: 6px; }
.score { color: #9b9ea2; }
.score svg { margin-left: 1px; vertical-align: -1px; }
.collapse { position: absolute; left: 50%; bottom: -6px; width: 22px; margin-left: -11px; background: #141517; }
.celebration { flex: none; margin: 4px 0 0; padding: 0 0 10px 31px; border-left: 3px solid #a35fd6; background: #191c1e; color: #c5c8cb; font-size: 8px; }
.celebration mark { padding: 2px 1px; background: #2a2d30; color: #fff; font-weight: 600; }
.feed { position: relative; flex: 1; min-height: 0; display: flex; flex-direction: column; justify-content: space-between; padding: 5px 12px 8px 13px; }
.bdg { width: 12px; height: 12px; margin-right: 3px; vertical-align: -3px; }
.bdg + b { margin-left: -1px; }
.mention { margin: -4px -3px -3px -6px; padding: 3px 5px; border: 1px solid #4fae35; border-radius: 6px; }
.reply { color: #74777b; font-size: 8px; line-height: 12px; }
.reply svg { vertical-align: -2px; }
.thumb { position: absolute; right: 0; bottom: 6px; width: 2px; height: 21px; background: #6b6e71; }
.as { color: #8a35b8; font-size: 13px; line-height: 10px; font-weight: 900; }
.composer { flex: none; padding: 0 13px 6px; }
.mode { color: #a2a5a9; font-size: 8px; }
.mode svg { vertical-align: -1px; }
.emotes { display: flex; justify-content: space-between; padding: 4px 2px 5px; }
.emotes svg { width: 14px; height: 14px; }
.field { display: flex; align-items: center; gap: 10px; height: 31px; padding: 0 11px 0 9px; border: 1px solid #4b4e51; border-radius: 3px; }
.field input { flex: 1; min-width: 0; border: 0; padding: 0; outline: 0; background: none; color: #fff; font: 10px/14px Inter, sans-serif; }
.field input::placeholder { color: #777a7e; opacity: 1; }
.mic { width: 13px; height: 14px; color: #8a22b0; }
.actions { display: flex; align-items: center; gap: 16px; padding-top: 5px; }
.points { gap: 3px; margin-left: 5px; }
.inf { width: 12px; height: 8px; }
.send { height: 22px; margin-left: -4px; padding: 0 8px; border-radius: 2px; background: #53fc18; color: #14350b; font-weight: 600; }
.support { position: absolute; right: 13px; bottom: 12px; width: 32px; height: 32px; border-radius: 50%; background: #14f514; }
.support svg { width: 17px; height: 17px; }

/* Name and badge colours */
.c-sand { color: #fbbf6d; } .c-gray { color: #a9acb0; } .c-orange { color: #f08a24; }
.c-purple { color: #a04bf0; } .c-pink { color: #e9567b; } .c-green { color: #72f23e; }
.c-blue { color: #2f6fcb; } .c-teal { color: #2fdcae; }
.yellow { color: #f3b21b; } .silver { color: #b9bcbf; } .bronze { color: #b97a50; }
.sand { color: #f0c052; } .pink { color: #e08ab0; } .cream { color: #f4d29b; }
.magenta { color: #b0319c; } .crimson { color: #a01d30; } .green { color: #3fe02a; }
.forest { color: #238c26; } .orchid { color: #b46cc4; }

/* Taskbar */
.taskbar { flex: none; display: grid; grid-template-columns: 1fr auto 1fr; align-items: center; height: 33px; border-top: 1px solid #35373a; background: #1f2022; }
.dock { grid-column: 2; display: flex; }
.dock button { position: relative; width: 21px; height: 28px; border-radius: 3px; }
.dock svg { width: 12px; height: 12px; }
.focused { background: #2a2b2e; }
.dock .focused::after, .dock .open::after { content: ""; position: absolute; bottom: 1px; width: 2px; height: 2px; border-radius: 1px; background: #aaa; }
.dock .focused::after { width: 8px; background: #b14fd0; }
.tray { display: flex; align-items: center; justify-content: flex-end; gap: 11px; padding-right: 12px; }
.tray svg:nth-child(6) { margin-left: -5px; }
.clock { margin-left: -2px; font: 8px/10px "Open Sans", "Noto Sans", sans-serif; text-align: right; }
```
